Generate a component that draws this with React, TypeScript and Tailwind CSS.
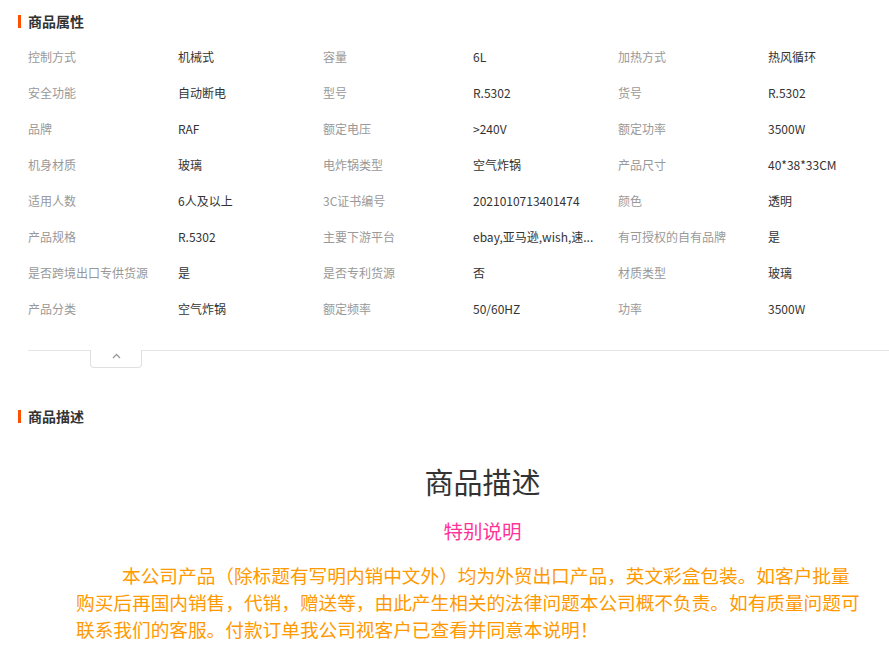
const attrs: [string, string][] = [
  ["控制方式", "机械式"],
  ["容量", "6L"],
  ["加热方式", "热风循环"],
  ["安全功能", "自动断电"],
  ["型号", "R.5302"],
  ["货号", "R.5302"],
  ["品牌", "RAF"],
  ["额定电压", ">240V"],
  ["额定功率", "3500W"],
  ["机身材质", "玻璃"],
  ["电炸锅类型", "空气炸锅"],
  ["产品尺寸", "40*38*33CM"],
  ["适用人数", "6人及以上"],
  ["3C证书编号", "2021010713401474"],
  ["颜色", "透明"],
  ["产品规格", "R.5302"],
  ["主要下游平台", "ebay,亚马逊,wish,速..."],
  ["有可授权的自有品牌", "是"],
  ["是否跨境出口专供货源", "是"],
  ["是否专利货源", "否"],
  ["材质类型", "玻璃"],
  ["产品分类", "空气炸锅"],
  ["额定频率", "50/60HZ"],
  ["功率", "3500W"],
];

const SectionTitle = ({ text }: { text: string }) => (
  <div className="flex items-center h-[20px]">
    <span className="w-[3px] h-[13px] bg-[#ff5000]" />
    <span className="ml-[7px] text-[14px] font-bold text-[#333]">{text}</span>
  </div>
);

const App = () => {
  return (
    <div
      className="w-[889px] h-[656px] overflow-hidden bg-white"
      style={{ fontFamily: '"Noto Sans CJK SC", "Noto Sans", sans-serif' }}
    >
      {/* 商品属性 */}
      <div className="pl-[18px] pt-[11px]">
        <SectionTitle text="商品属性" />
        <div className="pl-[10px] mt-[8px] grid grid-cols-[150px_145px_150px_145px_150px_145px] text-[12px]">
          {attrs.map(([k, v]) => (
            <div key={k} className="contents">
              <div className="h-[36px] flex items-center text-[#999] whitespace-nowrap">{k}</div>
              <div className="h-[36px] flex items-center text-[#333] whitespace-nowrap">{v}</div>
            </div>
          ))}
        </div>
        {/* collapse bar */}
        <div className="ml-[10px] mt-[23px] border-t border-[#e5e5e5] relative h-[17px]">
          <div className="absolute left-[62px] -top-px w-[52px] h-[18px] bg-white border border-t-0 border-[#e0e0e0] rounded-b-[4px] flex items-center justify-center">
            <svg width="9" height="6" viewBox="0 0 9 6" className="-mt-[5px]">
              <path d="M1 5 L4.5 1.5 L8 5" fill="none" stroke="#999" strokeWidth="1.3" />
            </svg>
          </div>
        </div>
      </div>

      {/* 商品描述 */}
      <div className="pl-[18px] mt-[39px]">
        <SectionTitle text="商品描述" />
      </div>
      <div className="ml-[76px] mt-[35px]">
        <div className="text-center text-[29px] leading-[40px] text-[#333]">商品描述</div>
        <div className="text-center text-[19.5px] leading-[26px] text-[#ff3399] mt-[17px]">特别说明</div>
        <p className="mt-[17px] text-[18.67px] leading-[27px] text-[#ff9900] whitespace-nowrap">
          <span className="pl-[46px]">本公司产品（除标题有写明内销中文外）均为外贸出口产品，英文彩盒包装。如客户批量</span>
          <br />
          购买后再国内销售，代销，赠送等，由此产生相关的法律问题本公司概不负责。如有质量问题可
          <br />
          联系我们的客服。付款订单我公司视客户已查看并同意本说明！
        </p>
      </div>
    </div>
  );
};

export default App;
